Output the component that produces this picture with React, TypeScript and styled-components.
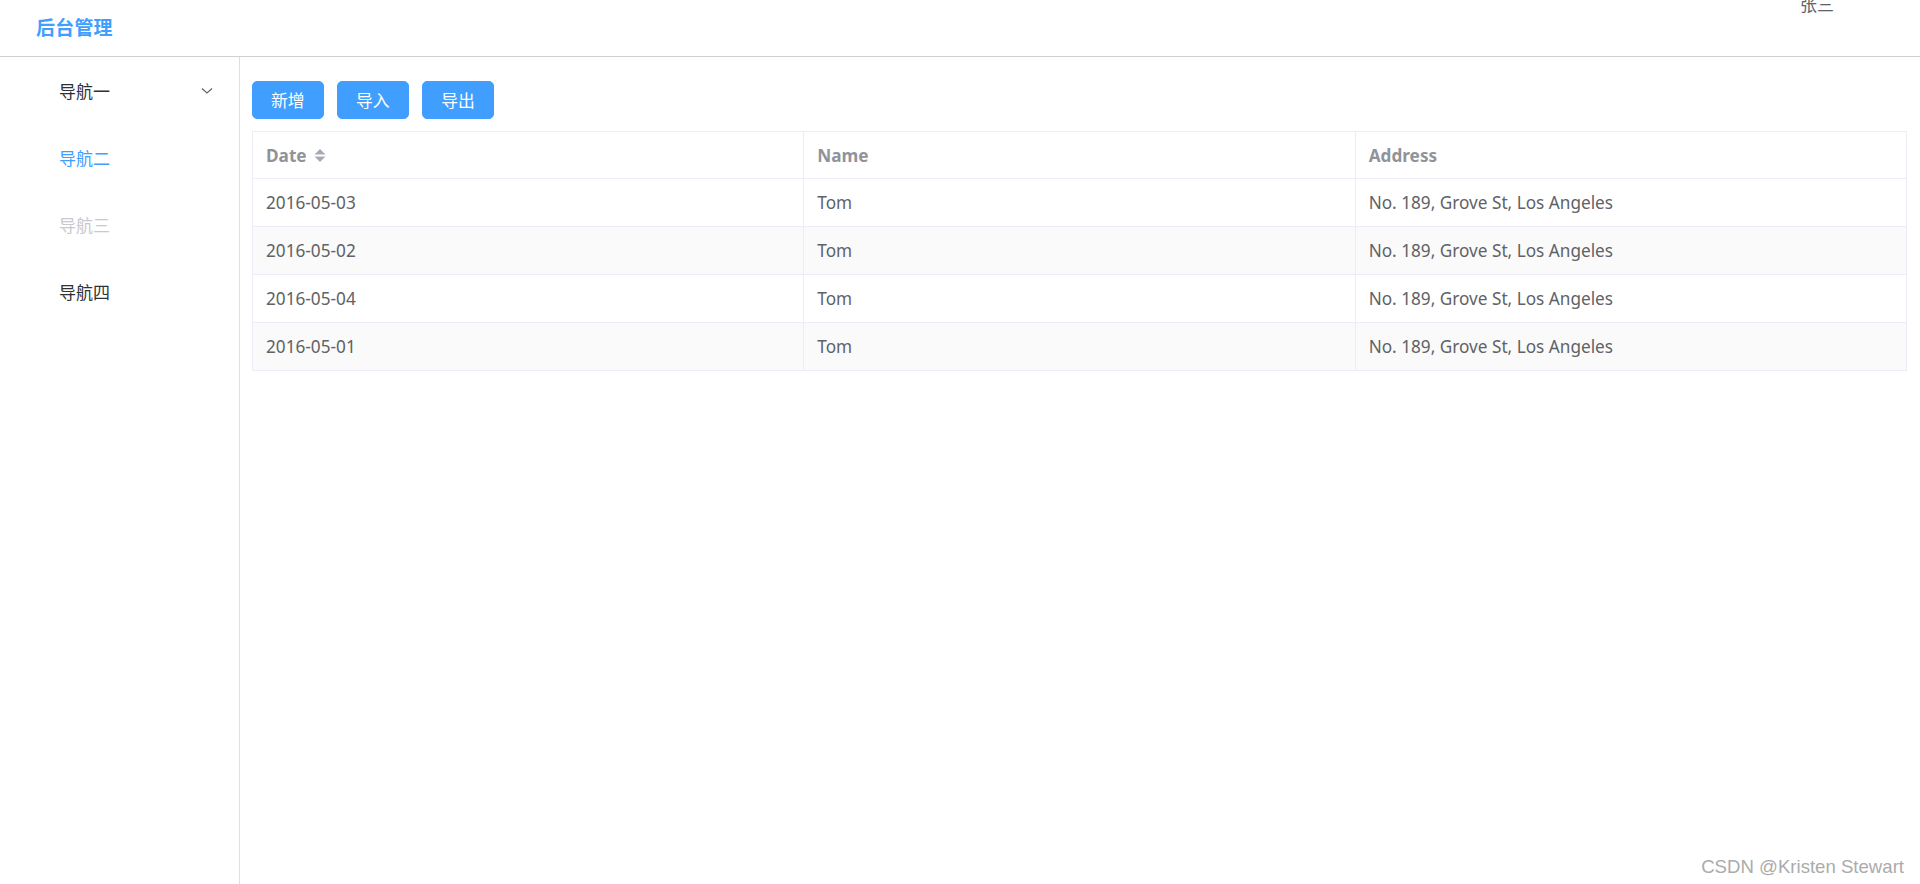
import React from "react";
import styled, { createGlobalStyle } from "styled-components";

const colors = {
  primary: "#409eff",
  text: "#303133",
  regular: "#606266",
  secondary: "#909399",
  disabled: "#c8c9cc",
  border: "#ebeef5",
  stripe: "#fafafa",
};

const GlobalStyle = createGlobalStyle`
  html, body {
    margin: 0;
    padding: 0;
    background: #fff;
  }
  body {
    font-family: "Noto Sans", "Noto Sans CJK SC", sans-serif;
    color: ${colors.regular};
  }
  * { box-sizing: border-box; }
`;

const Layout = styled.div`
  display: flex;
  flex-direction: column;
  height: 884px;
  overflow: hidden;
  position: relative;
`;

const Header = styled.header`
  display: flex;
  justify-content: space-between;
  align-items: center;
  height: 57px;
  flex-shrink: 0;
  padding: 0 86px 0 36px;
  border-bottom: 1px solid #cfd0d3;
`;

const Brand = styled.div`
  font-family: "Noto Sans CJK SC", sans-serif;
  font-size: 19px;
  font-weight: 700;
  color: ${colors.primary};
  letter-spacing: 0.2px;
  margin-top: -3px;
`;

// the user name sits half above the top edge in the original
const User = styled.div`
  align-self: flex-start;
  font-family: "Noto Sans CJK SC", sans-serif;
  font-size: 17px;
  line-height: 1;
  margin-top: -5px;
  color: ${colors.regular};
`;

const Body = styled.div`
  display: flex;
  flex: 1;
  min-height: 0;
`;

const Sidebar = styled.aside`
  width: 240px;
  flex-shrink: 0;
  border-right: 1px solid #dcdfe6;
`;

const MenuItem = styled.div<{ $state?: "active" | "disabled" }>`
  display: flex;
  align-items: center;
  justify-content: space-between;
  height: 67px;
  padding: 0 26px 0 59px;
  font-family: "Noto Sans CJK SC", sans-serif;
  font-size: 17px;
  color: ${(p) =>
    p.$state === "active"
      ? colors.primary
      : p.$state === "disabled"
      ? colors.disabled
      : colors.text};
`;

const Chevron = () => (
  <svg width="12" height="8" viewBox="0 0 12 8">
    <polyline
      points="1,1.5 6,6 11,1.5"
      fill="none"
      stroke="#606266"
      strokeWidth="1.1"
    />
  </svg>
);

const Main = styled.main`
  flex: 1;
  padding: 24px 13px 0 12px;
`;

const Toolbar = styled.div`
  display: flex;
  gap: 13.5px;
  margin-bottom: 12px;
`;

const Button = styled.button`
  height: 38px;
  padding: 0 18px;
  border: 1px solid ${colors.primary};
  border-radius: 5px;
  background: ${colors.primary};
  color: #fff;
  font-family: "Noto Sans CJK SC", sans-serif;
  font-size: 16.8px;
  cursor: pointer;
`;

const Table = styled.table`
  width: 100%;
  table-layout: fixed;
  border-collapse: collapse;
  border: 1px solid ${colors.border};
  font-size: 17.2px;
`;

const HeadCell = styled.th`
  height: 47px;
  padding: 0 14px 0 13px;
  text-align: left;
  font-weight: 700;
  color: ${colors.secondary};
  border-right: 1px solid ${colors.border};
  border-bottom: 1px solid ${colors.border};
`;

const HeadLabel = styled.span`
  display: inline-flex;
  align-items: center;
  gap: 7px;
`;

const Row = styled.tr<{ $striped?: boolean }>`
  background: ${(p) => (p.$striped ? colors.stripe : "#fff")};
`;

const Cell = styled.td`
  height: 48px;
  padding: 0 14px 0 13px;
  color: ${colors.regular};
  border-right: 1px solid ${colors.border};
  border-bottom: 1px solid ${colors.border};
`;

const SortCaret = () => (
  <svg width="12" height="15" viewBox="0 0 12 15">
    <polygon points="0.5,6.5 6,1 11.5,6.5" fill="#a8abb2" />
    <polygon points="0.5,8.5 6,14 11.5,8.5" fill="#a8abb2" />
  </svg>
);

const Watermark = styled.div`
  position: absolute;
  right: 16px;
  bottom: 6px;
  font-family: "Liberation Sans", Arial, sans-serif;
  font-size: 18.6px;
  color: #ababab;
  text-shadow: 0 0 1px #fff;
`;

const rows = [
  { date: "2016-05-03", name: "Tom", address: "No. 189, Grove St, Los Angeles" },
  { date: "2016-05-02", name: "Tom", address: "No. 189, Grove St, Los Angeles" },
  { date: "2016-05-04", name: "Tom", address: "No. 189, Grove St, Los Angeles" },
  { date: "2016-05-01", name: "Tom", address: "No. 189, Grove St, Los Angeles" },
];

const App: React.FC = () => {
  return (
    <Layout>
      <GlobalStyle />
      <Header>
        <Brand>后台管理</Brand>
        <User>张三</User>
      </Header>
      <Body>
        <Sidebar>
          <MenuItem>
            导航一
            <Chevron />
          </MenuItem>
          <MenuItem $state="active">导航二</MenuItem>
          <MenuItem $state="disabled">导航三</MenuItem>
          <MenuItem>导航四</MenuItem>
        </Sidebar>
        <Main>
          <Toolbar>
            <Button>新增</Button>
            <Button>导入</Button>
            <Button>导出</Button>
          </Toolbar>
          <Table>
            <thead>
              <tr>
                <HeadCell>
                  <HeadLabel>
                    Date
                    <SortCaret />
                  </HeadLabel>
                </HeadCell>
                <HeadCell>Name</HeadCell>
                <HeadCell>Address</HeadCell>
              </tr>
            </thead>
            <tbody>
              {rows.map((r, i) => (
                <Row key={r.date} $striped={i % 2 === 1}>
                  <Cell>{r.date}</Cell>
                  <Cell>{r.name}</Cell>
                  <Cell>{r.address}</Cell>
                </Row>
              ))}
            </tbody>
          </Table>
        </Main>
      </Body>
      <Watermark>CSDN @Kristen Stewart</Watermark>
    </Layout>
  );
};

export default App;
